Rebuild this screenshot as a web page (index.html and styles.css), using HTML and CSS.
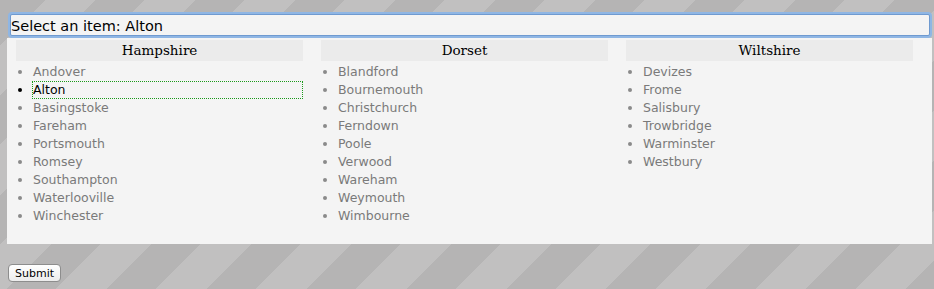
FILE: index.html
```html
<!doctype html>
<html lang="en">
  <head>
    <meta charset="UTF-8" />
    <title>Select an item</title>
    <link rel="stylesheet" href="styles.css">
  </head>
  <body>
    <form class="picker-form">
      <input class="picker-input" type="text" value="Select an item: Alton" />

      <div class="picker-panel">
        <div class="county">
          <h2 class="county-title">Hampshire</h2>
          <ul class="town-list">
            <li>Andover</li>
            <li class="selected"><span class="town-focus">Alton</span></li>
            <li>Basingstoke</li>
            <li>Fareham</li>
            <li>Portsmouth</li>
            <li>Romsey</li>
            <li>Southampton</li>
            <li>Waterlooville</li>
            <li>Winchester</li>
          </ul>
        </div>
        <div class="county">
          <h2 class="county-title">Dorset</h2>
          <ul class="town-list">
            <li>Blandford</li>
            <li>Bournemouth</li>
            <li>Christchurch</li>
            <li>Ferndown</li>
            <li>Poole</li>
            <li>Verwood</li>
            <li>Wareham</li>
            <li>Weymouth</li>
            <li>Wimbourne</li>
          </ul>
        </div>
        <div class="county">
          <h2 class="county-title">Wiltshire</h2>
          <ul class="town-list">
            <li>Devizes</li>
            <li>Frome</li>
            <li>Salisbury</li>
            <li>Trowbridge</li>
            <li>Warminster</li>
            <li>Westbury</li>
          </ul>
        </div>
      </div>

      <button class="submit-button" type="button">Submit</button>
    </form>
  </body>
</html>
```

FILE: styles.css
```css
* {
  margin: 0;
  padding: 0;
  box-sizing: border-box;
}

html {
  background: repeating-linear-gradient(
    135deg,
    #b5b4b4 0,
    #b5b4b4 31.82px,
    #c1c0c0 31.82px,
    #c1c0c0 67.18px,
    #b5b4b4 67.18px,
    #b5b4b4 70.71px
  );
  min-height: 100%;
}

body {
  font-family: "DejaVu Sans", sans-serif;
  min-height: 289px;
}

.picker-form {
  padding-top: 14px;
}

.picker-input {
  display: block;
  margin: 0 0 2px 10px;
  width: 920px;
  height: 22px;
  padding: 2px 0 0 0;
  border: 1px solid #6f9ad0;
  box-shadow: 0 0 0 2px #8fb6e4;
  border-radius: 2px;
  background: #f4f4f4;
  font-family: "DejaVu Sans", sans-serif;
  font-size: 14.5px;
  color: #000;
  outline: none;
}

.picker-panel {
  margin-left: 7px;
  width: 925px;
  padding: 2px 19px 19px 9px;
  background: #f4f4f4;
  display: grid;
  grid-template-columns: 287px 287px 287px;
  column-gap: 18px;
}

.county-title {
  background: #ebebeb;
  height: 21px;
  line-height: 21px;
  text-align: center;
  font-family: "DejaVu Serif", serif;
  font-size: 13.5px;
  font-weight: normal;
  color: #000;
}

.town-list {
  list-style: disc;
  margin-top: 2px;
  padding-left: 17px;
  color: #7a7a7a;
  font-size: 12.5px;
  line-height: 18px;
}

.town-list li::marker {
  color: #8a8a8a;
}

.town-list .selected {
  color: #000;
}

.town-list .selected::marker {
  color: #000;
}

.town-focus {
  display: block;
  margin-left: -1px;
  padding-left: 1px;
  outline: 1px dotted #1a9a1a;
  outline-offset: -1px;
}

.submit-button {
  display: block;
  margin: 20px 0 0 8px;
  width: 53px;
  height: 18px;
  border: 1px solid #8d8d8d;
  border-radius: 4px;
  background: linear-gradient(#ffffff, #ececec);
  font-family: "DejaVu Sans", sans-serif;
  font-size: 11px;
  color: #000;
}
```
